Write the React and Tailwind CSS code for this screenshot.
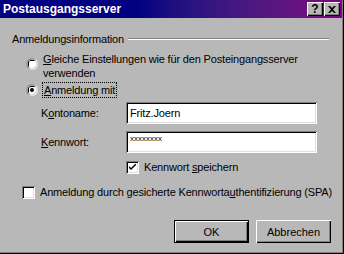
import React from 'react'

const font = { fontFamily: '"Liberation Sans", Arial, sans-serif' }

function U({ children }) {
  return <span className="underline underline-offset-[1px]">{children}</span>
}

function Radio({ checked }) {
  return (
    <span className="relative inline-block w-[12px] h-[12px] shrink-0">
      <svg width="12" height="12" viewBox="0 0 12 12" className="absolute inset-0">
        <path d="M8 1 H4 L2 2 L1 4 V8 L2 10" stroke="#808080" fill="none" />
        <path d="M4 11 H8 L10 10 L11 8 V4 L10 2" stroke="#fff" fill="none" />
        <circle cx="6" cy="6" r="4" fill="#fff" />
        <path d="M8.5 2.5 H4 L2.5 4 V8.5" stroke="#000" fill="none" />
        {checked && <circle cx="6" cy="6" r="2" fill="#000" />}
      </svg>
    </span>
  )
}

function Check({ checked }) {
  return (
    <span className="inline-flex w-[13px] h-[13px] shrink-0 bg-white shadow-[inset_1px_1px_#808080,inset_-1px_-1px_#fff,inset_2px_2px_#000,inset_-2px_-2px_#dfdfdf] items-center justify-center">
      {checked && (
        <svg width="7" height="7" viewBox="0 0 7 7">
          <path d="M0 2 L0 4 L2 6 L7 1 L7 -1 L2 4 Z" fill="#000" />
        </svg>
      )}
    </span>
  )
}

function Field({ value, password }) {
  return (
    <div className="w-[191px] h-[22px] bg-white shadow-[inset_1px_1px_#808080,inset_-1px_-1px_#fff,inset_2px_2px_#000,inset_-2px_-2px_#dfdfdf] flex items-center px-[4px]">
      {password ? (
        <span className="text-[8px] tracking-[0px] leading-none -mt-[6px]">{value}</span>
      ) : (
        <span className="text-[11px]">{value}</span>
      )}
    </div>
  )
}

function TitleButton({ children }) {
  return (
    <div className="w-[16px] h-[14px] bg-[#b8b8b8] shadow-[inset_1px_1px_#fff,inset_-1px_-1px_#000,inset_-2px_-2px_#808080] flex items-center justify-center text-[12px] font-bold text-black leading-none">
      {children}
    </div>
  )
}

export default function App() {
  return (
    <div
      className="w-[344px] h-[254px] bg-[#b8b8b8] text-black flex flex-col overflow-hidden shadow-[inset_-1px_-1px_#000,inset_-2px_-2px_#808080]"
      style={font}
    >
      <div className="h-[18px] shrink-0 mr-[2px] bg-gradient-to-r from-[#000080] from-40% to-[#800080] flex items-center justify-between pl-[3px] pr-[2px]">
        <span className="text-white font-bold text-[12px] leading-none">Postausgangsserver</span>
        <div className="flex gap-[1px]">
          <TitleButton>?</TitleButton>
          <TitleButton>
            <svg width="8" height="7" viewBox="0 0 8 7">
              <path d="M0 0 L2 0 L4 2 L6 0 L8 0 L5 3.5 L8 7 L6 7 L4 5 L2 7 L0 7 L3 3.5 Z" fill="#000" />
            </svg>
          </TitleButton>
        </div>
      </div>

      <div className="flex flex-col text-[11px] tracking-[-0.17px] leading-[14px] px-[12px]">
        <div className="flex items-center gap-[4px] mt-[14px]">
          <span>Anmeldungsinformation</span>
          <div className="flex-1 mr-[3px] h-[2px] border-t border-[#808080] border-b border-b-white" />
        </div>

        <div className="flex items-start gap-[5px] ml-[14px] mt-[6px]">
          <span className="mt-[6px]"><Radio /></span>
          <span>
            <U>G</U>leiche Einstellungen wie für den Posteingangsserver
            <br />
            verwenden
          </span>
        </div>

        <div className="flex items-center gap-[5px] ml-[14px] mt-[3px]">
          <Radio checked />
          <span className="outline-1 outline-dotted outline-black px-[1px]">
            <U>A</U>nmeldung mit
          </span>
        </div>

        <div className="flex items-center ml-[29px] mt-[5px]">
          <span className="w-[85px]">K<U>o</U>ntoname:</span>
          <Field value="Fritz.Joern" />
        </div>
        <div className="flex items-center ml-[29px] mt-[7px]">
          <span className="w-[85px]"><U>K</U>ennwort:</span>
          <Field value="xxxxxxxx" password />
        </div>

        <div className="flex items-center gap-[5px] ml-[114px] mt-[7px]">
          <Check checked />
          <span>Kennwort <U>s</U>peichern</span>
        </div>

        <div className="flex items-center gap-[5px] ml-[10px] mt-[11px] whitespace-nowrap">
          <Check />
          <span>Anmeldung durch gesicherte Kennworta<U>u</U>thentifizierung (SPA)</span>
        </div>

        <div className="flex justify-end gap-[7px] mt-[21px] mr-[1px] tracking-normal">
          <button className="w-[75px] h-[23px] bg-[#b8b8b8] shadow-[inset_1px_1px_#000,inset_-1px_-1px_#000,inset_2px_2px_#fff,inset_-2px_-2px_#000,inset_-3px_-3px_#808080] flex items-center justify-center text-[11px]">
            OK
          </button>
          <button className="w-[75px] h-[23px] bg-[#b8b8b8] shadow-[inset_1px_1px_#fff,inset_-1px_-1px_#000,inset_-2px_-2px_#808080] flex items-center justify-center text-[11px]">
            Abbrechen
          </button>
        </div>
      </div>
    </div>
  )
}
